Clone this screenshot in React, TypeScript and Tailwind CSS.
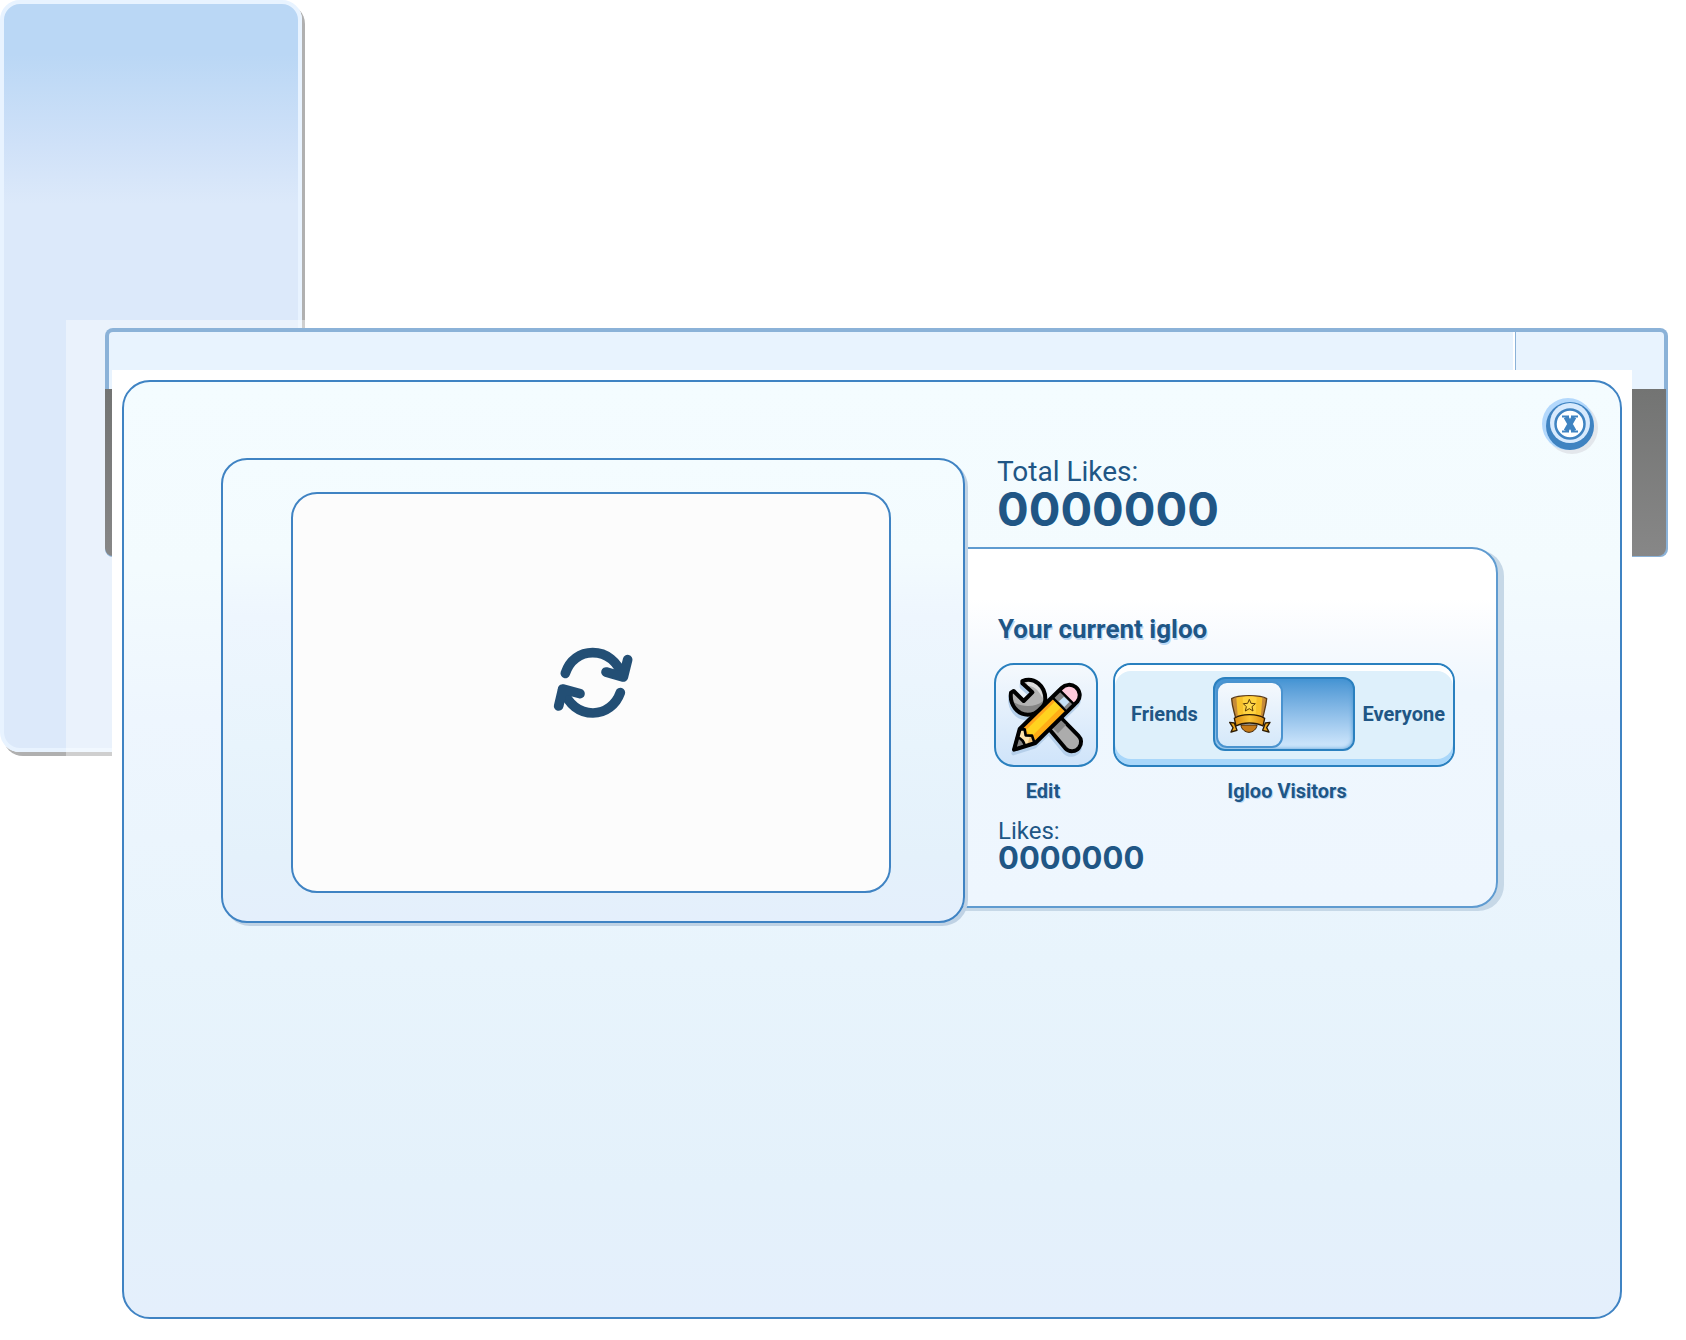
import { useState } from "react";

function RefreshIcon() {
  return (
    <svg viewBox="60 75 258 228" className="h-[76px] w-[86px]" fill="none" stroke="#234f75" strokeWidth="29" strokeLinecap="round" strokeLinejoin="round" aria-hidden="true">
      <path d="M106 160C119 120 151 98 188 98c42 0 74 27 91 71" />
      <path d="M228 156l52 15 13-52" />
      <path d="M271 218c-13 37-45 61-82 61-41 0-73-26-91-70" />
      <path d="M150 221l-52-14-12 51" />
    </svg>
  );
}

function ToolsIcon() {
  return (
    <svg viewBox="48 75 300 300" className="size-[100px]" strokeLinejoin="round" aria-hidden="true">
      <g fill="#b5cfea" stroke="#b5cfea" strokeWidth="12" transform="translate(-2 11)">
        <path d="M155 205l101 120c14 14 32 9 41-2 9-12 8-26-2-36L185 175z" />
        <path d="M127 123c36-14 69 15 69 54 0 25-27 47-53 47-30 0-55-29-50-66l8-5 30 30 26-26-30-27z" />
        <path d="M102 329l17-62L245 144c11-11 29-13 42-3 14 11 16 31 5 44L166 309z" />
      </g>
      <path d="M155 205l101 120c14 14 32 9 41-2 9-12 8-26-2-36L185 175z" fill="#acacac" stroke="#000" strokeWidth="12" />
      <path d="M216 262l24-24 18 17-24 25z" fill="#858585" />
      <path d="M127 123c36-14 69 15 69 54 0 25-27 47-53 47-30 0-55-29-50-66l8-5 30 30 26-26-30-27z" fill="#b3b3b3" />
      <path d="M97 182c20 20 68 23 93 0-2 22-24 36-47 37-22 1-42-15-46-37z" fill="#858585" />
      <path d="M139 125c26-4 51 22 49 50-12-28-31-38-45-38z" fill="#dcdcdc" />
      <path d="M127 123c36-14 69 15 69 54 0 25-27 47-53 47-30 0-55-29-50-66l8-5 30 30 26-26-30-27z" fill="none" stroke="#000" strokeWidth="12" />
      <path d="M102 329l17-62L245 144c11-11 29-13 42-3 14 11 16 31 5 44L166 309z" fill="#ffad16" />
      <path d="M136 267l92-92 21 21-95 94z" fill="#ffd21f" />
      <path d="M126 262l91-89 10 9-89 88z" fill="#ffa51b" />
      <path d="M102 329l18-63 16 4 3 16 18 2 10 20z" fill="#ffe4ab" />
      <path d="M150 288l10 0 8 21-28 10z" fill="#edbf72" />
      <path d="M102 329l10-38c10 4 20 14 23 27z" fill="#858585" stroke="#000" strokeWidth="8" />
      <path d="M218 172l21-22 48 48-22 21z" fill="#858585" />
      <path d="M237 184l15-14 16 16-15 15z" fill="#c6e0f6" />
      <path d="M246 143c12-12 30-13 42-2 14 12 15 32 4 44l-8 8-45-44z" fill="#ffcbdc" />
      <path d="M218 173l46 46M240 151l46 46" fill="none" stroke="#000" strokeWidth="7" />
      <path d="M118 268l16 0 3 18 19 1 7 20" fill="none" stroke="#000" strokeWidth="8" />
      <path d="M102 329l17-62L245 144c11-11 29-13 42-3 14 11 16 31 5 44L166 309z" fill="none" stroke="#000" strokeWidth="12" />
    </svg>
  );
}

function BadgeIcon() {
  return (
    <svg viewBox="108 160 138 126" className="h-[42px] w-[46px]" strokeLinejoin="round" aria-hidden="true">
      <defs>
        <linearGradient id="badge-ribbon">
          <stop offset="0" stopColor="#d88a12" />
          <stop offset=".5" stopColor="#fbc536" />
          <stop offset="1" stopColor="#d88a12" />
        </linearGradient>
      </defs>
      <path d="M116 248l14 2 8 22-18 5 6-13zM237 248l-14 2-8 22 19 5-7-13z" fill="#eba51c" stroke="#2b1a04" strokeWidth="4" />
      <path d="M150 256l48 0c0 12-13 22-24 22s-24-10-24-22z" fill="#c77b18" stroke="#3b2308" strokeWidth="3" />
      <path d="M122 177c18-12 87-12 105 0-2 22-6 33-12 58l-81 0c-6-25-11-36-12-58z" fill="#c58a39" stroke="#5b3b16" strokeWidth="4" />
      <path d="M136 174c22-6 56-6 78 0l-4 52-70 0z" fill="#f7c12b" />
      <path d="M155 173c12-3 30-3 42 0l-3 52-37 0z" fill="#ffd340" />
      <path d="M175 179l5 12 13 1-10 9 3 13-11-7-12 7 3-13-9-9 13-1z" fill="#ffda4c" stroke="#5d3b08" strokeWidth="3" />
      <path d="M130 236c20-15 70-15 91 0l-5 23c-22-12-60-12-81 0z" fill="url(#badge-ribbon)" stroke="#2b1a04" strokeWidth="4" />
    </svg>
  );
}

function CloseIcon() {
  return (
    <svg viewBox="0 0 56 56" className="size-14" aria-hidden="true">
      <circle cx="30" cy="30" r="26" fill="#e3e7ec" />
      <circle cx="26" cy="26" r="26" fill="#b3d8fc" />
      <circle cx="28" cy="28" r="24" fill="#3f83c1" />
      <circle cx="28" cy="25" r="20" fill="#d8eafd" />
      <circle cx="28" cy="26" r="14.5" fill="#fff" stroke="#3f83c1" strokeWidth="2.5" />
      <path d="M24 19l8 14M32 19l-8 14" fill="none" stroke="#3f83c1" strokeWidth="5" />
      <path d="M20 18.500h7M29 18.500h7M20 33.500h7M29 33.500h7" stroke="#3f83c1" strokeWidth="2" />
    </svg>
  );
}

function Backdrop() {
  return (
    <>
      <aside className="h-[752px] w-[302px] rounded-[20px] border-4 border-[#e8f3ff] bg-[linear-gradient(to_bottom,#bad7f5_0px,#bad7f5_50px,#cfe1f8_140px,#dce9fa_200px,#dce9fa_100%)] shadow-[3px_4px_0_#b0b0b0] [grid-area:1/1]" />
      <div className="mt-80 ml-[66px] h-[440px] bg-white/40 [grid-area:1/1]" />
      <header className="mt-[328px] mr-[18px] ml-[105px] flex h-[229px] flex-col overflow-hidden rounded-lg bg-[#8bb2d8] [grid-area:1/1]">
        <div className="mx-1 mt-1 flex h-[57px] rounded-t bg-[#e8f3fe]">
          <div className="flex-1 border-r-2 border-white" />
          <div className="w-[149px] border-l border-[#8bb2d8]" />
        </div>
        <div className="mr-0.5 mb-px flex-1 rounded-b-lg bg-linear-to-b from-[#737473] to-[#878787]" />
      </header>
    </>
  );
}

function Preview() {
  return (
    <section aria-label="Igloo preview" className="relative z-10 h-[465px] rounded-[26px] border-2 border-[#3f83c3] bg-[linear-gradient(to_bottom,#f4fcff_0%,#f3fbfe_20%,#eef6fe_34%,#e8f4fc_62%,#e4f1fb_86%,#e4effc_100%)] pt-8 pr-[72px] pl-[68px] shadow-[3px_3px_0_#bfd2e4]">
      <div className="flex h-[401px] items-center justify-center rounded-[26px] border-2 border-[#3f83c3] bg-[#fcfcfc]">
        <button type="button" aria-label="Refresh preview" className="-mt-5 -mr-1">
          <RefreshIcon />
        </button>
      </div>
    </section>
  );
}

function VisitorsSwitch() {
  const [everyone, setEveryone] = useState(false);
  return (
    <label className="flex h-[104px] w-[342px] cursor-pointer items-center rounded-[18px] border-2 border-[#2a80bf] bg-[#a9d7fa]">
      <span className="flex h-[100px] w-full flex-col rounded-2xl bg-linear-to-b from-white from-50% to-[#a9d7fa] to-50% py-1.5">
        <span className="flex flex-1 items-center rounded-2xl bg-[#def0fb] pr-2 pb-0.5 pl-4">
          <span className="w-[82px]">Friends</span>
          <input type="checkbox" role="switch" aria-label="Let everyone visit" checked={everyone} onChange={(e) => setEveryone(e.target.checked)} className="peer sr-only" />
          <span className="flex h-[74px] w-[142px] items-center rounded-xl border-2 border-[#2a80bf] bg-linear-to-b from-[#4594d3] to-[#d3e9fd] px-px shadow-[inset_0_0_4px_#4594d3] peer-checked:justify-end">
            <span className="flex size-[67px] items-center justify-center rounded-[11px] border-2 border-[#4a93cf] bg-linear-to-b from-[#f5f9fd] to-[#d5e8fa]">
              <BadgeIcon />
            </span>
          </span>
          <span className="flex-1 text-right">Everyone</span>
        </span>
      </span>
    </label>
  );
}

function IglooCard() {
  return (
    <section className="-ml-8 h-[361px] rounded-[26px] border-2 border-[#5f9bd0] bg-[linear-gradient(to_bottom,#fff_0%,#fff_14%,#f7fafe_26%,#eff7fe_40%,#eef6fe_100%)] pt-16 pl-[59px] shadow-[6px_3px_0_#c6d8e7]">
      <h2 className="pl-1 text-[26px] leading-8 font-bold [text-shadow:1px_2px_0_#bbd8f5]">Your current igloo</h2>
      <div className="mt-[18px] flex gap-[15px] text-xl font-bold">
        <div className="flex flex-col items-center">
          <button type="button" aria-labelledby="edit-label" className="flex size-[104px] items-center justify-center rounded-[20px] border-2 border-[#2a80bf] bg-linear-to-b from-[#f5f9fd] to-[#cfe4fa]">
            <ToolsIcon />
          </button>
          <span id="edit-label" className="mt-2.5 mr-1.5 leading-7 [text-shadow:1px_1px_0_#bbd8f5]">Edit</span>
        </div>
        <div className="flex flex-col items-center">
          <VisitorsSwitch />
          <span className="mt-2.5 ml-1.5 leading-7 [text-shadow:1px_1px_0_#bbd8f5]">Igloo Visitors</span>
        </div>
      </div>
      <p className="mt-2.5 flex flex-col pl-1">
        <span className="text-2xl leading-8 font-normal">Likes:</span>
        <span className="font-[Inter] text-[31px] leading-[22px] font-bold">0000000</span>
      </p>
    </section>
  );
}

export default function App() {
  return (
    <main className="grid min-h-screen grid-cols-1 items-start bg-white font-['Roboto',sans-serif] text-[#205685]">
      <Backdrop />
      <div className="z-10 mt-[370px] mr-[54px] ml-[112px] bg-white p-2.5 [grid-area:1/1]">
        <div role="dialog" aria-label="Igloo" className="min-h-[939px] rounded-[28px] border-2 border-[#3f83c3] bg-[linear-gradient(to_bottom,#f4fcff_0%,#f3fbfe_20%,#eef6fe_36%,#e8f4fc_62%,#e4f1fb_86%,#e4effc_100%)] pr-[122px] pl-[97px]">
          <div className="mr-[-100px] flex h-[76px] justify-end pt-4">
            <button type="button" aria-label="Close" className="size-14">
              <CloseIcon />
            </button>
          </div>
          <div className="grid grid-cols-[744fr_533fr]">
            <Preview />
            <div>
              <p className="flex h-[89px] flex-col pl-8">
                <span className="-mt-1 text-[28px] leading-9 font-normal">Total Likes:</span>
                <span className="font-[Inter] text-[47px] leading-[38px] font-bold">0000000</span>
              </p>
              <IglooCard />
            </div>
          </div>
        </div>
      </div>
    </main>
  );
}
